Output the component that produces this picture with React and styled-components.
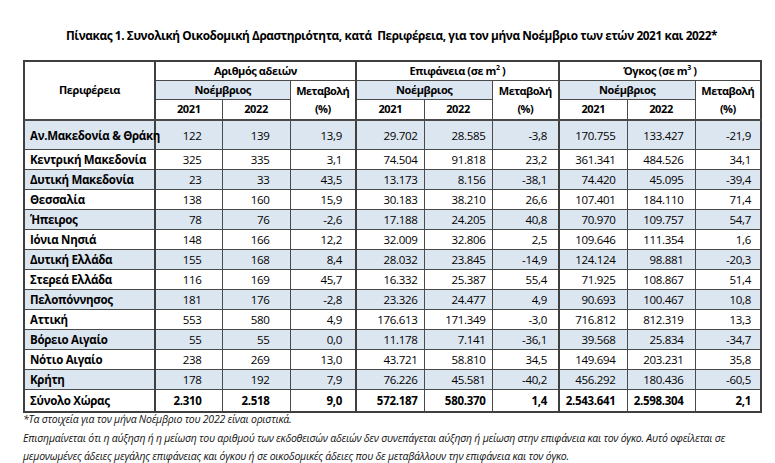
import React from 'react';
import styled, { createGlobalStyle } from 'styled-components';

const GlobalStyle = createGlobalStyle`
  body {
    margin: 0;
    background: #ffffff;
    font-family: "Open Sans", "Noto Sans", sans-serif;
    color: #000000;
  }
`;

const Page = styled.div`
  width: 775px;
  height: 463px;
  padding: 27px 0 0 23px;
  box-sizing: border-box;
  overflow: hidden;
`;

const Title = styled.h1`
  width: 737px;
  margin: 0 0 17px 0;
  font-size: 11.8px;
  font-weight: 700;
  line-height: 16px;
  text-align: center;
  letter-spacing: -0.4px;
  white-space: pre;
`;

const Table = styled.table`
  width: 737px;
  table-layout: fixed;
  border-collapse: collapse;
  border: 2px solid #3f3f3f;
  font-size: 11.5px;
  letter-spacing: -0.3px;
`;

const HeadCell = styled.th`
  height: ${(p) => p.$h || 18}px;
  padding: 0;
  font-size: 11px;
  font-weight: 700;
  line-height: ${(p) => (p.$tall ? 1.6 : 1.1)};
  letter-spacing: ${(p) => (p.$tall ? -0.6 : -0.4)}px;
  text-align: center;
  vertical-align: middle;
  white-space: nowrap;
  background: ${(p) => (p.$shade ? '#dce6f1' : '#ffffff')};
  border: 1px solid #4a4a4a;
  border-right-width: ${(p) => (p.$thick ? 2 : 1)}px;
  border-bottom-width: ${(p) => (p.$bottom ? 2 : 1)}px;
  border-right-color: ${(p) => (p.$thick ? '#3f3f3f' : '#4a4a4a')};

  sup {
    font-size: 7px;
    vertical-align: 5px;
    line-height: 0;
  }
`;

const Cell = styled.td`
  height: ${(p) => p.$h || 19}px;
  padding: 0 ${(p) => p.$pad ?? 10}px 0 ${(p) => (p.$left ? 5 : 0)}px;
  text-align: ${(p) => (p.$left ? 'left' : 'right')};
  font-weight: ${(p) => (p.$bold ? 700 : 400)};
  vertical-align: middle;
  white-space: nowrap;
  background: ${(p) => (p.$shade ? '#dce6f1' : '#ffffff')};
  border: 1px solid #4a4a4a;
  border-right-width: ${(p) => (p.$thick ? 2 : 1)}px;
  border-right-color: ${(p) => (p.$thick ? '#3f3f3f' : '#4a4a4a')};
`;

const Notes = styled.div`
  margin-top: -3px;
  font-size: 10.5px;
  font-style: italic;
  line-height: 18.5px;
  letter-spacing: -0.25px;
  color: #111111;
`;

const NoteLine = styled.div`
  white-space: nowrap;
`;

const widths = [131, 67, 68, 66, 68, 68, 67, 68, 68, 66];
// right padding per data column
const pads = [0, 20, 20, 13, 6, 6, 11, 11, 11, 9];

const rows = [
  ['Αν.Μακεδονία & Θράκη', '122', '139', '13,9', '29.702', '28.585', '-3,8', '170.755', '133.427', '-21,9'],
  ['Κεντρική Μακεδονία', '325', '335', '3,1', '74.504', '91.818', '23,2', '361.341', '484.526', '34,1'],
  ['Δυτική Μακεδονία', '23', '33', '43,5', '13.173', '8.156', '-38,1', '74.420', '45.095', '-39,4'],
  ['Θεσσαλία', '138', '160', '15,9', '30.183', '38.210', '26,6', '107.401', '184.110', '71,4'],
  ['Ήπειρος', '78', '76', '-2,6', '17.188', '24.205', '40,8', '70.970', '109.757', '54,7'],
  ['Ιόνια Νησιά', '148', '166', '12,2', '32.009', '32.806', '2,5', '109.646', '111.354', '1,6'],
  ['Δυτική Ελλάδα', '155', '168', '8,4', '28.032', '23.845', '-14,9', '124.124', '98.881', '-20,3'],
  ['Στερεά Ελλάδα', '116', '169', '45,7', '16.332', '25.387', '55,4', '71.925', '108.867', '51,4'],
  ['Πελοπόννησος', '181', '176', '-2,8', '23.326', '24.477', '4,9', '90.693', '100.467', '10,8'],
  ['Αττική', '553', '580', '4,9', '176.613', '171.349', '-3,0', '716.812', '812.319', '13,3'],
  ['Βόρειο Αιγαίο', '55', '55', '0,0', '11.178', '7.141', '-36,1', '39.568', '25.834', '-34,7'],
  ['Νότιο Αιγαίο', '238', '269', '13,0', '43.721', '58.810', '34,5', '149.694', '203.231', '35,8'],
  ['Κρήτη', '178', '192', '7,9', '76.226', '45.581', '-40,2', '456.292', '180.436', '-60,5'],
];

const total = ['Σύνολο Χώρας', '2.310', '2.518', '9,0', '572.187', '580.370', '1,4', '2.543.641', '2.598.304', '2,1'];

const isThick = (i) => i === 0 || i === 3 || i === 6;

function DataRow({ cells, shade, bold, h }) {
  return (
    <tr>
      {cells.map((c, i) => (
        <Cell
          key={i}
          $left={i === 0}
          $bold={bold || i === 0}
          $pad={pads[i]}
          $thick={isThick(i)}
          $shade={shade}
          $h={h}
        >
          {c}
        </Cell>
      ))}
    </tr>
  );
}

function Group({ label, thick }) {
  return (
    <HeadCell colSpan={3} $thick={thick} $h={18}>
      {label}
    </HeadCell>
  );
}

export default function App() {
  return (
    <Page>
      <GlobalStyle />
      <Title>
        {'Πίνακας 1. Συνολική Οικοδομική Δραστηριότητα, κατά  Περιφέρεια, για τον μήνα Νοέμβριο των ετών 2021 και 2022*'}
      </Title>
      <Table>
        <colgroup>
          {widths.map((w, i) => (
            <col key={i} style={{ width: w }} />
          ))}
        </colgroup>
        <thead>
          <tr>
            <HeadCell rowSpan={3} $thick $bottom>
              Περιφέρεια
            </HeadCell>
            <Group label="Αριθμός αδειών" thick />
            <Group
              label={
                <>
                  Επιφάνεια (σε m<sup>2</sup> )
                </>
              }
              thick
            />
            <Group
              label={
                <>
                  Όγκος (σε m<sup>3</sup> )
                </>
              }
            />
          </tr>
          <tr>
            {[0, 1, 2].map((g) => (
              <React.Fragment key={g}>
                <HeadCell colSpan={2} $shade $h={18}>
                  Νοέμβριος
                </HeadCell>
                <HeadCell rowSpan={2} $thick={g < 2} $bottom $tall>
                  Μεταβολή
                  <br />
                  (%)
                </HeadCell>
              </React.Fragment>
            ))}
          </tr>
          <tr>
            {[0, 1, 2].map((g) => (
              <React.Fragment key={g}>
                <HeadCell $bottom $h={19}>2021</HeadCell>
                <HeadCell $bottom $h={19}>2022</HeadCell>
              </React.Fragment>
            ))}
          </tr>
        </thead>
        <tbody>
          {rows.map((r, i) => (
            <DataRow key={r[0]} cells={r} shade={i % 2 === 0} h={i === 0 ? 28 : 19} />
          ))}
          <DataRow cells={total} bold h={21} />
        </tbody>
      </Table>
      <Notes>
        <NoteLine>*Τα στοιχεία για τον μήνα Νοέμβριο του 2022 είναι οριστικά.</NoteLine>
        <NoteLine>
          Επισημαίνεται ότι η αύξηση ή η μείωση του αριθμού των εκδοθεισών αδειών δεν συνεπάγεται αύξηση ή μείωση στην επιφάνεια και τον όγκο. Αυτό οφείλεται σε
        </NoteLine>
        <NoteLine>
          μεμονωμένες άδειες μεγάλης επιφάνειας και όγκου ή σε οικοδομικές άδειες που δε μεταβάλλουν την επιφάνεια και τον όγκο.
        </NoteLine>
      </Notes>
    </Page>
  );
}
